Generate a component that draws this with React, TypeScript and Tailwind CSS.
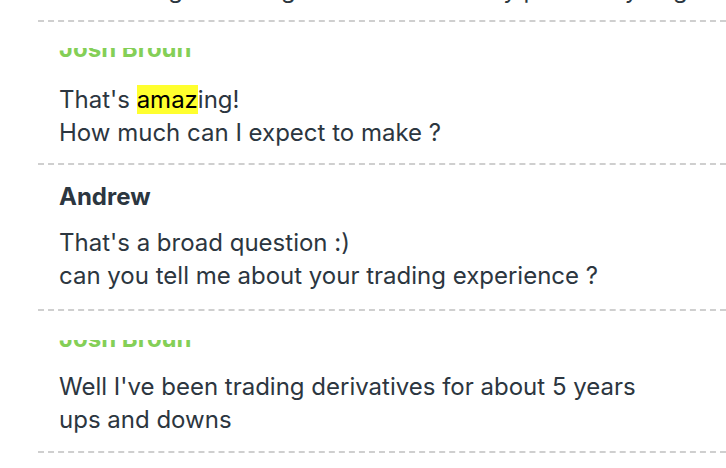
import React from "react";

const font = { fontFamily: "Inter, 'Noto Sans', sans-serif" };

function Block({ children, className = "" }: { children: React.ReactNode; className?: string }) {
  return (
    <div className={`border-b-2 border-dashed border-[#cfcfcf] pl-[21px] pr-4 ${className}`}>{children}</div>
  );
}

function Message({ lines }: { lines: React.ReactNode[] }) {
  return (
    <div className="text-[24px] leading-[33px] text-[#2c3640]">
      {lines.map((l, i) => (
        <div key={i} className="whitespace-nowrap">{l}</div>
      ))}
    </div>
  );
}

function ClippedName({ top, height, shift }: { top: string; height: string; shift: string }) {
  return (
    <div className="h-[34px] flex flex-col">
      <div className={`${top} ${height} overflow-hidden flex flex-col`}>
        <div className={`${shift} text-[24px] leading-[24px] font-bold text-[#84cf57] whitespace-nowrap`}>
          Josh Broun
        </div>
      </div>
    </div>
  );
}

export default function App() {
  return (
    <div className="w-[726px] h-[468px] overflow-hidden bg-white" style={font}>
      <div className="ml-[38px] flex flex-col">
        <Block className="-mt-[27px] pb-[14px]">
          <Message lines={["I'm looking at the big stock market in my portfolio you get"]} />
        </Block>

        <Block className="pt-[15px] pb-[14px]">
          <ClippedName top="mt-[11px]" height="h-[11px]" shift="-mt-[11px]" />
          <div className="mt-[12px]">
            <Message
              lines={[
                <>
                  That's <mark className="bg-[#ffff2e] text-black">amaz</mark>ing!
                </>,
                "How much can I expect to make ?",
              ]}
            />
          </div>
        </Block>

        <Block className="pt-[15px] pb-[17px]">
          <div className="h-[34px] text-[24px] leading-[34px] font-bold text-[#2c3640]">Andrew</div>
          <div className="mt-[12px]">
            <Message
              lines={["That's a broad question :)", "can you tell me about your trading experience ?"]}
            />
          </div>
        </Block>

        <Block className="pt-[13px] pb-[15px]">
          <ClippedName top="mt-[16px]" height="h-[8px]" shift="-mt-[13px]" />
          <div className="mt-[12px]">
            <Message
              lines={["Well I've been trading derivatives for about 5 years", "ups and downs"]}
            />
          </div>
        </Block>

        <Block className="pt-[15px] pb-[14px]">
          <div className="h-[34px] text-[24px] leading-[34px] font-bold text-[#2c3640]">Andrew</div>
        </Block>
      </div>
    </div>
  );
}
